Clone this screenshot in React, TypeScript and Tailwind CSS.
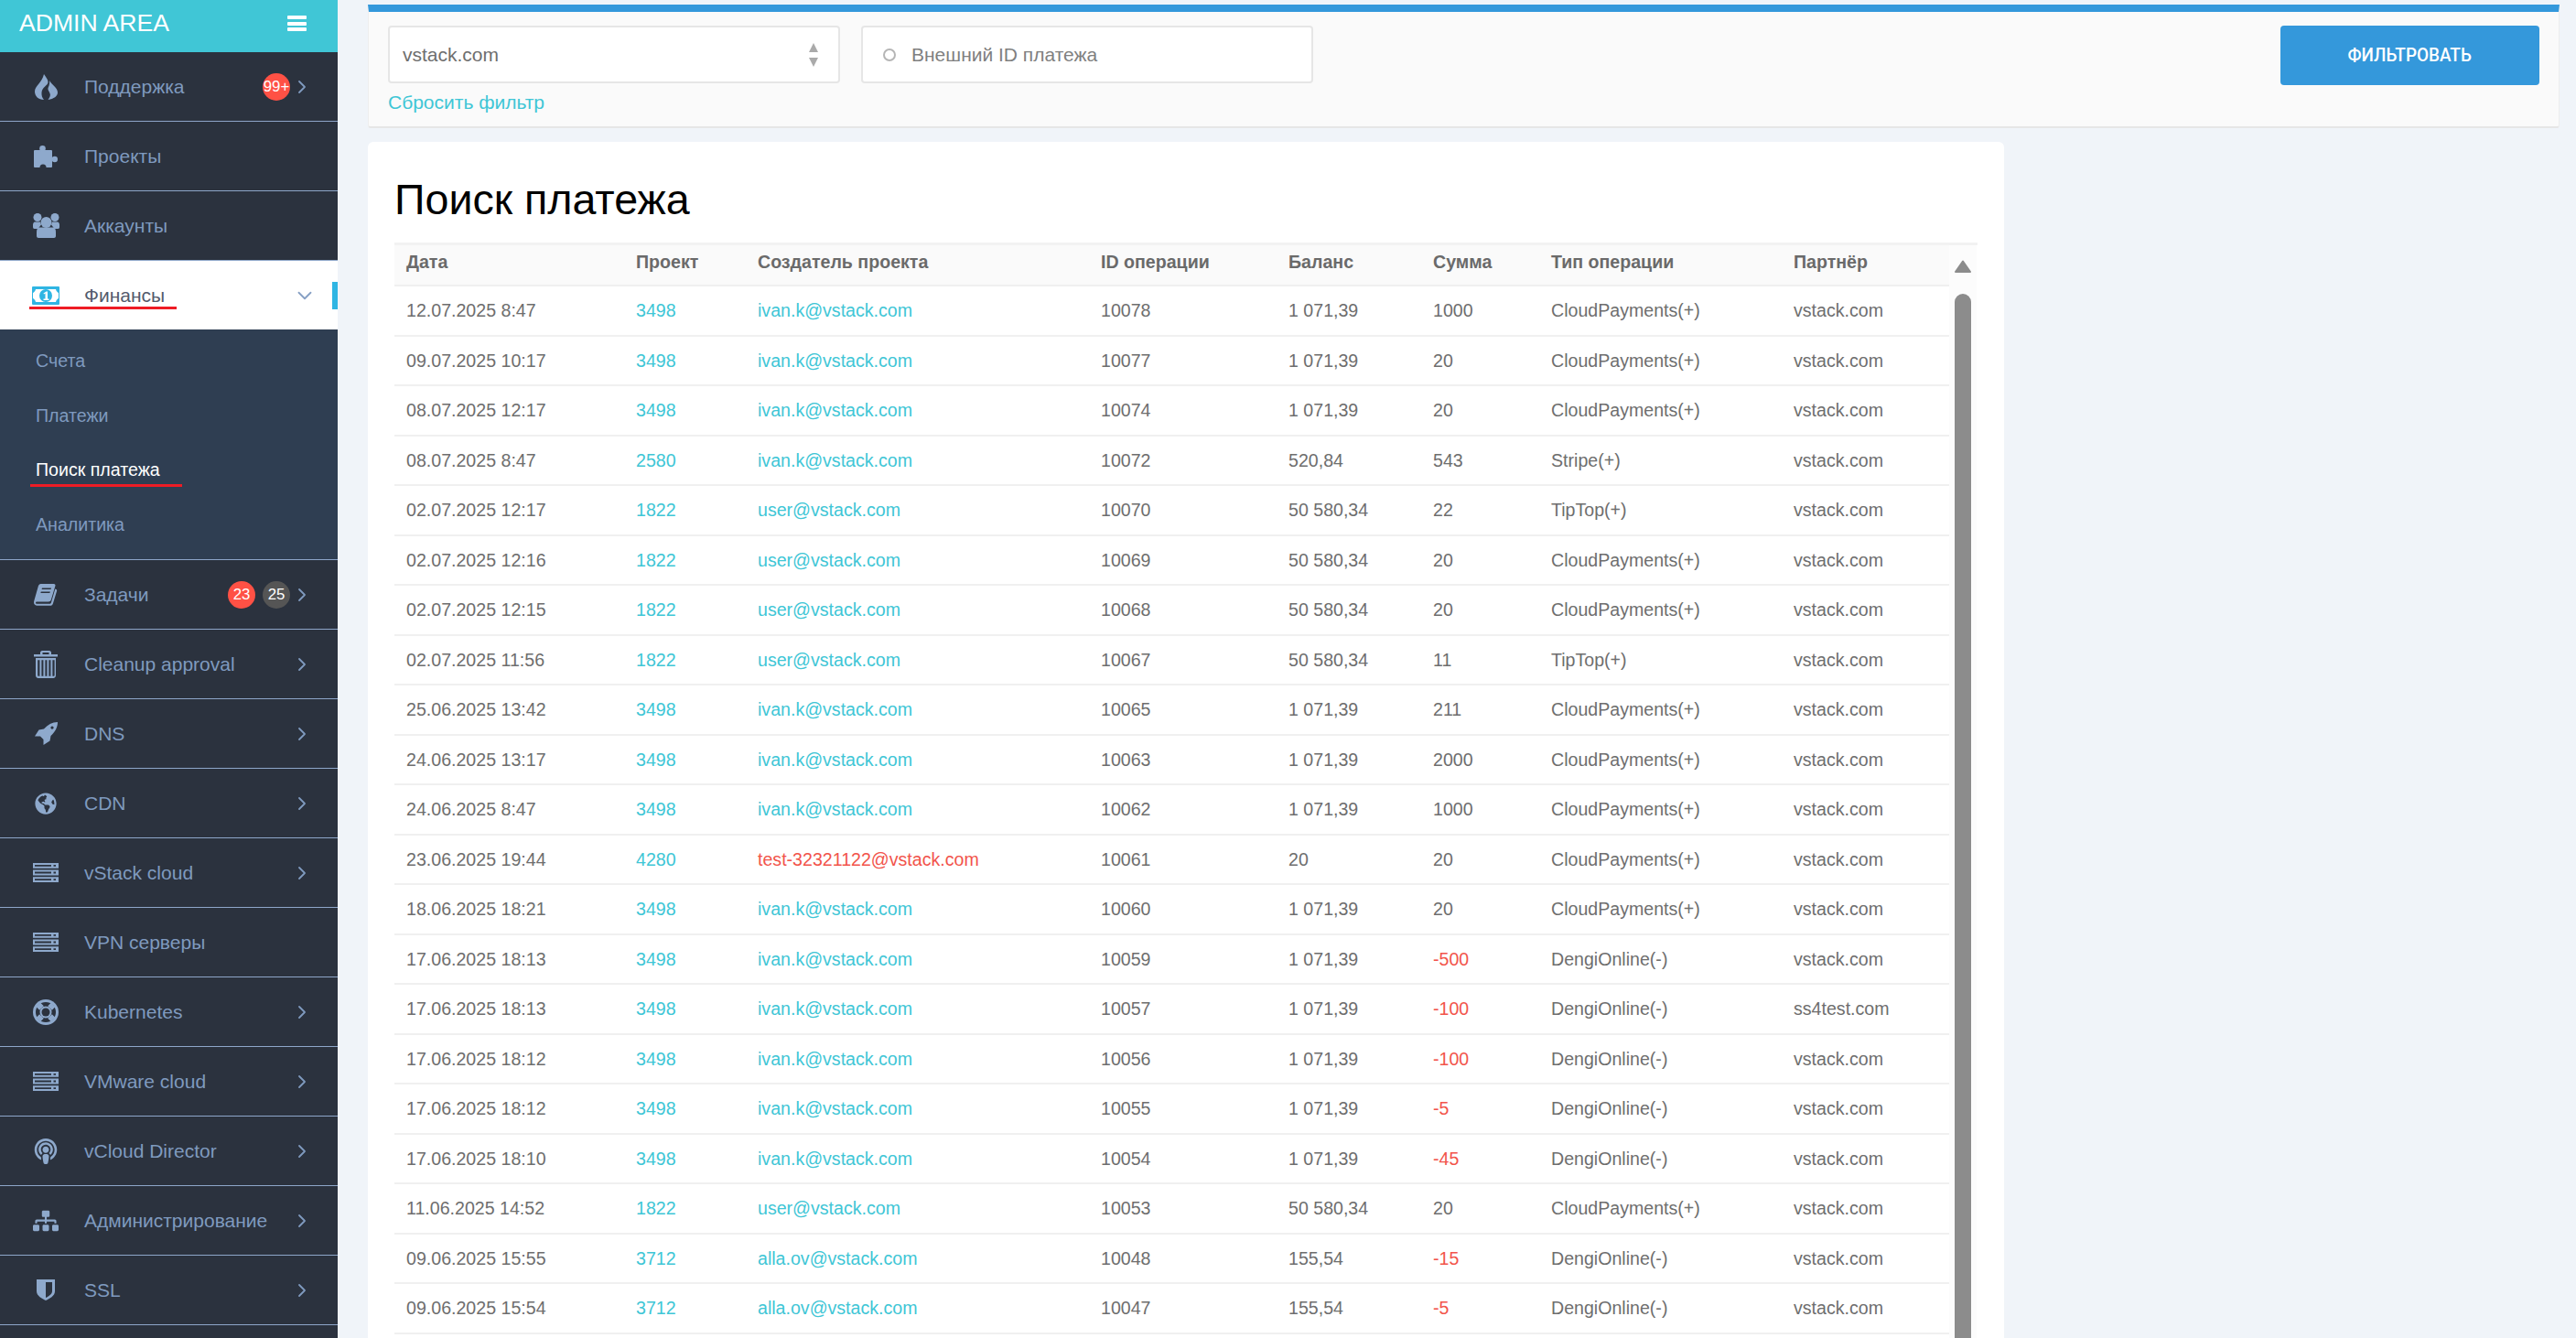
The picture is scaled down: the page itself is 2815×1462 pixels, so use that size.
import { FaGlobeAmericas, FaPodcast, FaSitemap } from "react-icons/fa";
import { ChevronDown, ChevronRight } from "lucide-react";
import type { ReactNode } from "react";

const sans = "font-['Liberation_Sans',Arial,sans-serif]";
const navBg = "#2b323e";

function FireIcon() {
  return (
    <svg viewBox="0 0 25 28" className="h-7 w-[25px]" fill="currentColor">
      <path d="M10 0C12 3 14.500 6 14.500 8.500C14.500 12.500 8 14 7.500 20C7.300 23 8 26 10 28C4 28 0 24 0 19C0 13 8 9 10 0z" />
      <path d="M16 7C19 12 25 15 25 20C25 24 21 27 14.500 28C16.500 25 17.500 23 16.500 21C15.500 18 13.500 17 15 14C16 11.500 16.500 9 16 7z" />
    </svg>
  );
}

function PuzzleIcon() {
  return (
    <svg viewBox="0 0 26 24" className="h-6 w-[26px]" fill="currentColor">
      <rect x="0" y="5" width="20" height="19" rx="1" />
      <circle cx="9.500" cy="3.300" r="3.300" />
      <circle cx="22.800" cy="15" r="3.200" />
      <circle cx="10" cy="24" r="3.500" fill={navBg} />
    </svg>
  );
}

function UsersIcon() {
  return (
    <svg viewBox="0 0 29 27" className="h-[27px] w-[29px]" fill="currentColor">
      <circle cx="5" cy="4.500" r="4.500" />
      <circle cx="24" cy="4.500" r="4.500" />
      <path d="M2 9.500h6l1 3-3.500 4.500H1.500C.5 17 0 16 0 15v-2.500C0 11 1 9.500 2 9.500z" />
      <path d="M27 9.500h-6l-1 3 3.500 4.500h4c1 0 1.500-1 1.500-2v-2.500c0-1.500-1-3-2-3z" />
      <circle cx="14.500" cy="10" r="6" />
      <path d="M7 15.500h15c2 0 3 2 3 5V25c0 1.200-1 2-2 2H6c-1 0-2-.8-2-2v-4.500c0-3 1-5 3-5z" />
    </svg>
  );
}

function MoneyIcon() {
  return (
    <svg viewBox="0 0 30 20" className="h-5 w-[30px]">
      <rect width="30" height="20" rx="1" fill="#2fb5e3" />
      <path d="M4 3h22c.4 2 1.800 3.400 3 4v6c-1.200.6-2.600 2-3 4H4c-.4-2-1.800-3.400-3-4V7c1.200-.6 2.600-2 3-4z" fill="#fff" />
      <circle cx="15" cy="10" r="7" fill="#2fb5e3" />
      <path d="M12.500 7.500l3-2h1.500v8h1.500V15h-6v-1.500h2V7.600l-1.500 1z" fill="#fff" />
    </svg>
  );
}

function BookIcon() {
  return (
    <svg viewBox="0 0 26 24" className="h-6 w-[26px]" fill="currentColor">
      <path fillRule="evenodd" d="M7.500 0h14.300c1.300 0 2 1 1.600 2.200l-4.600 15.400c-.4 1.300-1.500 2-2.800 2H3.500c-.9 0-1.500.4-1.500 1.100 0 .8.700 1.100 1.500 1.100h13.700c.9 0 1.400-.4 1.700-1.300L23.300 5.500l1.100.6c.6.300.9 1 .7 1.700l-4.200 13.700c-.4 1.400-1.600 2.300-3 2.300H3.700C1.700 23.800 0 22.200 0 20.200c0-.5.100-1 .2-1.500L4.900 2.300C5.300 1 6.200 0 7.500 0zM9 4.500l-.4 1.500h10l.4-1.500zM7.800 8.500l-.4 1.500h10l.4-1.500z" />
    </svg>
  );
}

function TrashIcon() {
  return (
    <svg viewBox="0 0 26 30" className="h-[30px] w-[26px]" fill="currentColor">
      <path fillRule="evenodd" d="M9 0h8c1 0 2 1 2 2v2h7v2.500H0V4h7V2c0-1 1-2 2-2zm.5 2v2h7V2zM2 8h22v19c0 1.600-1.200 3-2.800 3H4.800C3.200 30 2 28.600 2 27zm2.200 2.200V27c0 .5.300.800.700.800h1.500V10.200zm4.200 0v17.600h2V10.200zm4 0v17.600h2V10.200zm4 0v17.600h2V10.200zm4 0v17.600h1.500c.4 0 .7-.3.700-.8V10.200z" />
    </svg>
  );
}

function RocketIcon() {
  return (
    <svg viewBox="0 0 25 25" className="h-[25px] w-[25px]" fill="currentColor">
      <path fillRule="evenodd" d="M25 0C25 6 22 11 17.500 15L16.500 20.500 9.500 25V19L6 15.500H0L4.500 8.500 10 7.500C14 3 19 0 25 0zM19 4.500a1.600 1.600 0 1 0 .01 0z" />
    </svg>
  );
}

function ServerIcon() {
  return (
    <svg viewBox="0 0 28 21" className="h-[21px] w-7" fill="currentColor">
      <path fillRule="evenodd" d="M0 0h28v5.800H0zm2 2v1.800h18V2zm20.500 0v1.800h2.500V2zM0 7.600h28v5.800H0zm2 2v1.800h18V9.600zm20.500 0v1.800h2.500V9.600zM0 15.200h28V21H0zm2 2V19h18v-1.800zm20.500 0V19h2.500v-1.800z" />
    </svg>
  );
}

function LifeRingIcon() {
  return (
    <svg viewBox="-14 -14 28 28" className="h-7 w-7" fill="none">
      <circle r="14" fill="currentColor" />
      <circle r="8.500" stroke={navBg} strokeWidth="5" />
      <g stroke="currentColor" strokeWidth="6.500">
        <path d="M-4.500-4.500L-8-8M4.500-4.500L8-8M-4.500 4.500L-8 8M4.500 4.500L8 8" />
      </g>
      <circle r="6.500" fill="currentColor" />
      <circle r="4.500" fill={navBg} />
    </svg>
  );
}

function ShieldIcon() {
  return (
    <svg viewBox="0 0 20 23" className="h-[23px] w-5" fill="currentColor">
      <path fillRule="evenodd" d="M0 0H20V13C20 18 14 21 10 23C6 21 0 18 0 13zM10 3V20C13 18.500 17 16 17 13V3z" />
    </svg>
  );
}

interface NavItem {
  icon: ReactNode;
  label: string;
  chevron?: boolean;
  badges?: { text: string; color: string }[];
}

const topItems: NavItem[] = [
  { icon: <FireIcon />, label: "Поддержка", chevron: true, badges: [{ text: "99+", color: "bg-[#ff5145]" }] },
  { icon: <PuzzleIcon />, label: "Проекты" },
  { icon: <UsersIcon />, label: "Аккаунты" },
];

const bottomItems: NavItem[] = [
  {
    icon: <BookIcon />,
    label: "Задачи",
    chevron: true,
    badges: [
      { text: "23", color: "bg-[#ff5145]" },
      { text: "25", color: "bg-[#555555]" },
    ],
  },
  { icon: <TrashIcon />, label: "Cleanup approval", chevron: true },
  { icon: <RocketIcon />, label: "DNS", chevron: true },
  { icon: <FaGlobeAmericas className="h-6 w-6" />, label: "CDN", chevron: true },
  { icon: <ServerIcon />, label: "vStack cloud", chevron: true },
  { icon: <ServerIcon />, label: "VPN серверы" },
  { icon: <LifeRingIcon />, label: "Kubernetes", chevron: true },
  { icon: <ServerIcon />, label: "VMware cloud", chevron: true },
  { icon: <FaPodcast className="h-7 w-7" />, label: "vCloud Director", chevron: true },
  { icon: <FaSitemap className="h-7 w-7" />, label: "Администрирование", chevron: true },
  { icon: <ShieldIcon />, label: "SSL", chevron: true },
];

function MenuRow({ item }: { item: NavItem }) {
  return (
    <div className="flex h-[76px] items-center border-b border-[#8ea6c9] bg-[#2b323e] pl-[35px] pr-[27px] text-[#7f9abf]">
      <span className="flex w-[30px] shrink-0 justify-center text-[#8ea9cc]">{item.icon}</span>
      <span className="ml-[27px] flex-1 text-[21px] leading-none">{item.label}</span>
      {item.badges?.map((b) => (
        <span key={b.text} className={`ml-2 flex h-[30px] w-[30px] items-center justify-center rounded-full text-[16.8px] text-white ${b.color}`}>
          {b.text}
        </span>
      ))}
      {item.chevron && <ChevronRight className="ml-px h-6 w-6" strokeWidth={1.8} />}
    </div>
  );
}

const subItems = ["Счета", "Платежи", "Поиск платежа", "Аналитика"];

function Sidebar() {
  return (
    <aside className="h-full w-[369px] shrink-0 overflow-hidden bg-[#2b323e]">
      <div className="flex h-[57px] items-center justify-between bg-[#40c6d6] pb-[6px] pl-[21px] pr-[34px] text-white">
        <span className="text-[26.6px] leading-none">ADMIN AREA</span>
        <span className="flex w-[21px] flex-col gap-[2.5px]">
          <span className="h-[4px] rounded-[1px] bg-white" />
          <span className="h-[4px] rounded-[1px] bg-white" />
          <span className="h-[4px] rounded-[1px] bg-white" />
        </span>
      </div>
      {topItems.map((item) => (
        <MenuRow key={item.label} item={item} />
      ))}
      <div className="relative flex h-[75px] items-center bg-white pl-[35px] pr-[23px]">
        <MoneyIcon />
        <span className="ml-[27px] flex-1 text-[21px] leading-none text-[#535a6c]">Финансы</span>
        <ChevronDown className="h-[26px] w-[26px] text-[#86a0c4]" strokeWidth={1.7} />
        <span className="absolute right-0 top-[23px] h-[30px] w-[6px] bg-[#2fb5e3]" />
        <span className="absolute left-[32px] top-[50px] h-[3px] w-[161px] bg-[#ee1c25]" />
      </div>
      <div className="flex h-[252px] flex-col border-b border-[#8ea6c9] bg-[#2f3e52] pl-[39px] pt-[5px] text-[19.6px]">
        {subItems.map((s) => (
          <div key={s} className={`relative flex h-[59.5px] items-center ${s === "Поиск платежа" ? "text-white" : "text-[#7f9abf]"}`}>
            {s}
            {s === "Поиск платежа" && <span className="absolute left-[-6px] top-[45px] h-[3px] w-[166px] bg-[#ee1c25]" />}
          </div>
        ))}
      </div>
      {bottomItems.map((item) => (
        <MenuRow key={item.label} item={item} />
      ))}
    </aside>
  );
}

const columns = [
  { title: "Дата", w: "w-[251px]" },
  { title: "Проект", w: "w-[133px]" },
  { title: "Создатель проекта", w: "w-[375px]" },
  { title: "ID операции", w: "w-[205px]" },
  { title: "Баланс", w: "w-[158px]" },
  { title: "Сумма", w: "w-[129px]" },
  { title: "Тип операции", w: "w-[265px]" },
  { title: "Партнёр", w: "flex-1" },
];

type Row = [string, string, string, string, string, string, string, string];

const cp = "CloudPayments(+)";
const dg = "DengiOnline(-)";
const iv = "ivan.k@vstack.com";
const us = "user@vstack.com";
const al = "alla.ov@vstack.com";
const vs = "vstack.com";

const rows: Row[] = [
  ["12.07.2025 8:47", "3498", iv, "10078", "1 071,39", "1000", cp, vs],
  ["09.07.2025 10:17", "3498", iv, "10077", "1 071,39", "20", cp, vs],
  ["08.07.2025 12:17", "3498", iv, "10074", "1 071,39", "20", cp, vs],
  ["08.07.2025 8:47", "2580", iv, "10072", "520,84", "543", "Stripe(+)", vs],
  ["02.07.2025 12:17", "1822", us, "10070", "50 580,34", "22", "TipTop(+)", vs],
  ["02.07.2025 12:16", "1822", us, "10069", "50 580,34", "20", cp, vs],
  ["02.07.2025 12:15", "1822", us, "10068", "50 580,34", "20", cp, vs],
  ["02.07.2025 11:56", "1822", us, "10067", "50 580,34", "11", "TipTop(+)", vs],
  ["25.06.2025 13:42", "3498", iv, "10065", "1 071,39", "211", cp, vs],
  ["24.06.2025 13:17", "3498", iv, "10063", "1 071,39", "2000", cp, vs],
  ["24.06.2025 8:47", "3498", iv, "10062", "1 071,39", "1000", cp, vs],
  ["23.06.2025 19:44", "4280", "test-32321122@vstack.com", "10061", "20", "20", cp, vs],
  ["18.06.2025 18:21", "3498", iv, "10060", "1 071,39", "20", cp, vs],
  ["17.06.2025 18:13", "3498", iv, "10059", "1 071,39", "-500", dg, vs],
  ["17.06.2025 18:13", "3498", iv, "10057", "1 071,39", "-100", dg, "ss4test.com"],
  ["17.06.2025 18:12", "3498", iv, "10056", "1 071,39", "-100", dg, vs],
  ["17.06.2025 18:12", "3498", iv, "10055", "1 071,39", "-5", dg, vs],
  ["17.06.2025 18:10", "3498", iv, "10054", "1 071,39", "-45", dg, vs],
  ["11.06.2025 14:52", "1822", us, "10053", "50 580,34", "20", cp, vs],
  ["09.06.2025 15:55", "3712", al, "10048", "155,54", "-15", dg, vs],
  ["09.06.2025 15:54", "3712", al, "10047", "155,54", "-5", dg, vs],
];

function cellColor(i: number, value: string) {
  if (i === 1) return "text-[#40c6d6]";
  if (i === 2) return value.startsWith("test-") ? "text-[#f2544b]" : "text-[#40c6d6]";
  if (i === 5 && value.startsWith("-")) return "text-[#f2544b]";
  return "text-[#6e6e6e]";
}

function PaymentsTable() {
  return (
    <div className="mt-[18px] flex border-t-[3px] border-[#f2f2f2]">
      <div className="w-[1699px] shrink-0">
        <div className="flex h-[45px] items-center border-b-2 border-[#f0f0f0] bg-[#fafafa] pb-[5px] pl-[13px] text-[19.6px] font-bold text-[#6a6a6a]">
          {columns.map((c) => (
            <div key={c.title} className={c.w}>
              {c.title}
            </div>
          ))}
        </div>
        {rows.map((r) => (
          <div key={r.join()} className="flex h-[54.5px] items-center border-b-2 border-[#f0f0f0] pl-[13px] pt-px text-[19.6px]">
            {r.map((value, i) => (
              <div key={i} className={`${columns[i].w} ${cellColor(i, value)}`}>
                {value}
              </div>
            ))}
          </div>
        ))}
      </div>
      <div className="flex w-[30px] flex-col items-center bg-[#fcfcfc] pt-[16px]">
        <svg viewBox="0 0 18 14" className="h-[14px] w-[18px]" fill="#8c8c8c" stroke="#8c8c8c" strokeWidth="2" strokeLinejoin="round">
          <path d="M9 1.500L17 13H1z" />
        </svg>
        <div className="mt-[23px] h-[1300px] w-[18px] rounded-t-[9px] bg-[#8c8c8c]" />
      </div>
    </div>
  );
}

export default function App() {
  return (
    <div className={`flex h-[1462px] w-[2815px] overflow-hidden bg-[#f0f4f9] ${sans}`}>
      <Sidebar />
      <main className="min-w-0 flex-1 pl-[33px] pr-[18px] pt-[5px]">
        <section className="flex h-[135px] items-start justify-between rounded-b-[3px] border-x border-t-[8px] border-b-2 border-x-[#eeeeee] border-t-[#3498db] border-b-[#e6e6e6] bg-[#fafafa] px-[21px] pt-[15px]">
          <div>
            <div className="flex gap-[23px]">
              <div className="flex h-[63px] w-[494px] items-center justify-between rounded-[4px] border-2 border-[#e6e6e6] bg-white pl-[14px] pr-[22px] text-[21px] text-[#6e6e6e]">
                vstack.com
                <span className="flex flex-col gap-[6px]">
                  <span className="h-0 w-0 border-x-[5px] border-b-[10px] border-x-transparent border-b-[#aaaaaa]" />
                  <span className="h-0 w-0 border-x-[5px] border-t-[10px] border-x-transparent border-t-[#aaaaaa]" />
                </span>
              </div>
              <div className="flex h-[63px] w-[494px] items-center rounded-[4px] border-2 border-[#e6e6e6] bg-white pl-[22px] text-[21px] text-[#808080]">
                <span className="mr-[17px] h-[14px] w-[14px] rounded-full border-2 border-[#b5b5b5]" />
                Внешний ID платежа
              </div>
            </div>
            <a className="mt-[9px] block text-[21px] leading-[24px] text-[#40c6d6]">Сбросить фильтр</a>
          </div>
          <button className="h-[65px] w-[283px] rounded-[4px] bg-[#3498db] font-['Roboto',sans-serif] text-[21px] font-medium uppercase text-white">
            <span className="inline-block scale-x-90">Фильтровать</span>
          </button>
        </section>
        <section className="mt-[15px] w-[1788px] rounded-[6px] bg-white px-[29px] pt-[35px]">
          <h1 className="text-[46.6px] leading-[57px] text-black">Поиск платежа</h1>
          <PaymentsTable />
        </section>
      </main>
    </div>
  );
}
